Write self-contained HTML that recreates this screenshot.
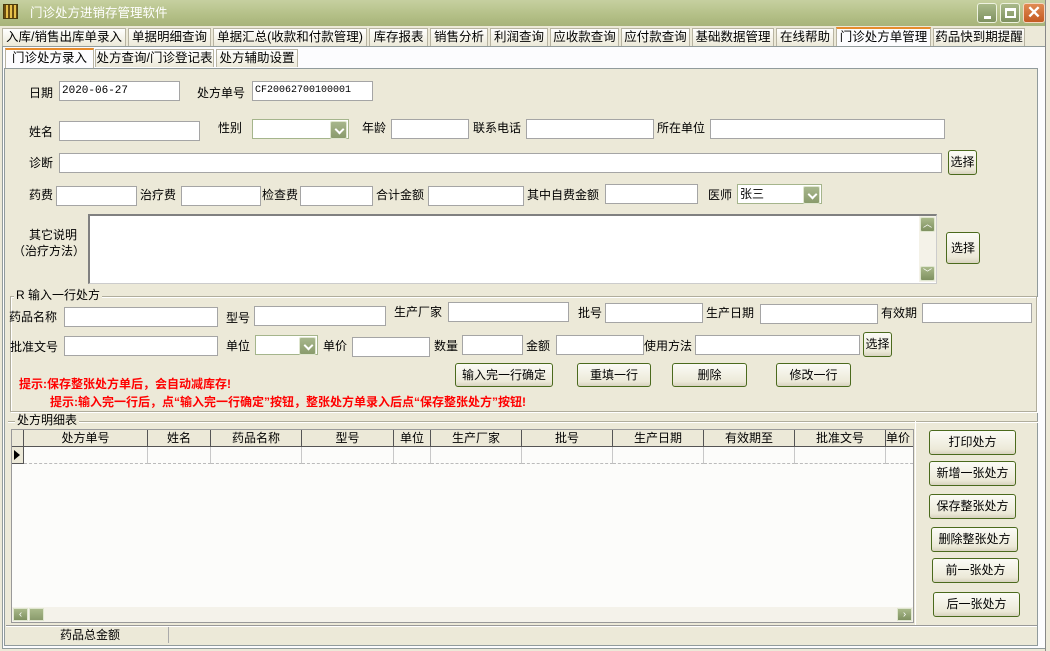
<!DOCTYPE html>
<html><head><meta charset="utf-8">
<style>
*{box-sizing:border-box;margin:0;padding:0}
body{width:1050px;height:651px;overflow:hidden;background:#ece9d8;font-family:"Liberation Sans","WenQuanYi Zen Hei","Noto Sans CJK SC",sans-serif;font-size:12px;color:#000;position:relative}
.a{position:absolute}
.l{position:absolute;white-space:nowrap;line-height:14px}
.i{position:absolute;background:#fff;border:1px solid #a5a5a5;height:20px;font-size:12px;line-height:18px;padding-left:2px;white-space:nowrap}
.s{position:absolute;background:#fff;border:1px solid #a5b58c;height:20px;line-height:18px;padding-left:2px}
.s:after{content:"";position:absolute;right:1px;top:1px;width:15px;height:16px;background:linear-gradient(#a7b68c,#8a9b6c);border:1px solid #dfe6cf;border-radius:2px}
.s:before{content:"";position:absolute;right:5px;top:6px;width:5px;height:5px;border-right:2px solid #fff;border-bottom:2px solid #fff;transform:rotate(45deg);z-index:2}
.b{position:absolute;background:linear-gradient(#fbfbf6,#ece9d8 80%,#d8d3bf);border:1px solid #4b6a1d;border-radius:3px;text-align:center;white-space:nowrap;font-size:12px}
.tab{position:absolute;top:28px;height:18px;border:1px solid #b8b4a2;border-bottom:none;background:linear-gradient(#fff,#ece9d8);text-align:center;line-height:17px;font-size:12.5px;white-space:nowrap}
.st{position:absolute;top:49px;height:18px;border:1px solid #b8b4a2;border-bottom:none;background:linear-gradient(#fff,#ece9d8);text-align:center;line-height:17px;font-size:12.5px;white-space:nowrap}
.red{position:absolute;color:#f00;font-weight:bold;white-space:nowrap;font-size:12px}
.th{position:absolute;top:430px;height:16px;border-right:1px solid #555;text-align:center;line-height:16px;font-size:12px;background:#ece9d8}
.td{position:absolute;top:447px;height:17px;border-right:1px solid #c8c8c8;border-bottom:1px dashed #bbb}
</style></head><body>
<!-- title bar -->
<div class="a" style="left:0;top:0;width:1050px;height:26px;background:linear-gradient(#c6d0a0,#b3bf86 60%,#a7b37a)"></div>
<div class="a" style="left:3px;top:4px;width:15px;height:15px;background:repeating-linear-gradient(90deg,#6b4d10 0 2px,#e7c04a 2px 4px);border:1px solid #4b3a0a"></div>
<div class="l" style="left:30px;top:6px;color:#fff;font-size:12.5px">门诊处方进销存管理软件</div>
<div class="a" style="left:977px;top:3px;width:20px;height:20px;background:linear-gradient(#a9b98a,#7f9160);border:1px solid #eef2e0;border-radius:3px"><div class="a" style="left:6px;top:12px;width:7px;height:3px;background:#fff"></div></div>
<div class="a" style="left:1000px;top:3px;width:20px;height:20px;background:linear-gradient(#a9b98a,#7f9160);border:1px solid #eef2e0;border-radius:3px"><div class="a" style="left:4px;top:4px;width:11px;height:10px;border:2px solid #fff;border-top-width:3px"></div></div>
<div class="a" style="left:1023px;top:3px;width:22px;height:20px;background:linear-gradient(#e08a52,#c45a22);border:1px solid #f5d6c0;border-radius:3px;color:#fff;font-size:17px;line-height:18px;text-align:center;font-weight:bold">✕</div>
<!-- top tabs -->
<div class="tab" style="left:2px;width:124px">入库/销售出库单录入</div>
<div class="tab" style="left:128px;width:83px">单据明细查询</div>
<div class="tab" style="left:213px;width:154px">单据汇总(收款和付款管理)</div>
<div class="tab" style="left:369px;width:59px">库存报表</div>
<div class="tab" style="left:430px;width:58px">销售分析</div>
<div class="tab" style="left:490px;width:58px">利润查询</div>
<div class="tab" style="left:550px;width:69px">应收款查询</div>
<div class="tab" style="left:621px;width:69px">应付款查询</div>
<div class="tab" style="left:692px;width:82px">基础数据管理</div>
<div class="tab" style="left:776px;width:58px">在线帮助</div>
<div class="tab" style="left:836px;width:95px;top:27px;height:20px;background:#fcfcfe;border-top:2px solid #e68b2c">门诊处方单管理</div>
<div class="tab" style="left:933px;width:92px">药品快到期提醒</div>
<!-- outer panel -->
<div class="a" style="left:2px;top:46px;width:1044px;height:603px;border:1px solid #919b9c;background:#fcfcfe"></div>
<div class="a" style="left:1045px;top:0;width:5px;height:651px;background:#ece9d8;border-left:1px solid #888"></div>
<!-- sub tabs -->
<div class="st" style="left:5px;width:89px;top:48px;height:20px;background:#fcfcfe;border-top:2px solid #e68b2c">门诊处方录入</div>
<div class="st" style="left:95px;width:119px">处方查询/门诊登记表</div>
<div class="st" style="left:216px;width:82px">处方辅助设置</div>
<div class="a" style="left:4px;top:68px;width:1034px;height:578px;border:1px solid #919b9c;background:#ece9d8"></div>
<!-- row 1 -->
<div class="l" style="left:29px;top:86px">日期</div>
<div class="i" style="left:59px;top:81px;width:121px;font-family:'Liberation Mono',monospace;font-size:11px">2020-06-27</div>
<div class="l" style="left:197px;top:86px">处方单号</div>
<div class="i" style="left:252px;top:81px;width:121px;font-family:'Liberation Mono',monospace;font-size:10px">CF20062700100001</div>
<!-- row 2 -->
<div class="l" style="left:29px;top:125px">姓名</div>
<div class="i" style="left:59px;top:121px;width:141px"></div>
<div class="l" style="left:218px;top:121px">性别</div>
<div class="s" style="left:252px;top:119px;width:97px"></div>
<div class="l" style="left:362px;top:121px">年龄</div>
<div class="i" style="left:391px;top:119px;width:78px"></div>
<div class="l" style="left:473px;top:121px">联系电话</div>
<div class="i" style="left:526px;top:119px;width:128px"></div>
<div class="l" style="left:657px;top:121px">所在单位</div>
<div class="i" style="left:710px;top:119px;width:235px"></div>
<!-- row 3 -->
<div class="l" style="left:29px;top:156px">诊断</div>
<div class="i" style="left:59px;top:153px;width:883px"></div>
<div class="b" style="left:948px;top:150px;width:29px;height:25px;line-height:23px">选择</div>
<!-- row 4 -->
<div class="l" style="left:29px;top:188px">药费</div>
<div class="i" style="left:56px;top:186px;width:81px"></div>
<div class="l" style="left:140px;top:188px">治疗费</div>
<div class="i" style="left:181px;top:186px;width:80px"></div>
<div class="l" style="left:262px;top:188px">检查费</div>
<div class="i" style="left:300px;top:186px;width:73px"></div>
<div class="l" style="left:376px;top:188px">合计金额</div>
<div class="i" style="left:428px;top:186px;width:96px"></div>
<div class="l" style="left:527px;top:188px">其中自费金额</div>
<div class="i" style="left:605px;top:184px;width:93px"></div>
<div class="l" style="left:708px;top:188px">医师</div>
<div class="s" style="left:737px;top:184px;width:85px">张三</div>
<!-- notes -->
<div class="l" style="left:27px;top:228px;width:50px;text-align:right">其它说明</div>
<div class="l" style="left:13px;top:244px">（治疗方法）</div>
<div class="a" style="left:88px;top:214px;width:849px;height:70px;background:#fff;border:1px solid #ccc;border-top:2px solid #808080;border-left:2px solid #808080"></div>
<div class="a" style="left:919px;top:216px;width:17px;height:66px;background:#f4f2e8"></div>
<div class="a" style="left:920px;top:217px;width:15px;height:15px;background:linear-gradient(#a9b98a,#7f9160);border:1px solid #dfe6cf;border-radius:2px;color:#fff;font-size:9px;text-align:center;line-height:13px">︿</div>
<div class="a" style="left:920px;top:266px;width:15px;height:15px;background:linear-gradient(#a9b98a,#7f9160);border:1px solid #dfe6cf;border-radius:2px;color:#fff;font-size:9px;text-align:center;line-height:13px">﹀</div>
<div class="b" style="left:946px;top:232px;width:34px;height:32px;line-height:30px">选择</div>
<!-- group R -->
<div class="a" style="left:10px;top:296px;width:1027px;height:116px;border:1px solid #b0ad9c;box-shadow:inset 1px 1px #fff,1px 1px #fff"></div>
<div class="l" style="left:14px;top:288px;background:#ece9d8;padding:0 2px">R 输入一行处方</div>
<div class="l" style="left:9px;top:310px">药品名称</div>
<div class="i" style="left:64px;top:307px;width:154px"></div>
<div class="l" style="left:226px;top:311px">型号</div>
<div class="i" style="left:254px;top:306px;width:132px"></div>
<div class="l" style="left:394px;top:305px">生产厂家</div>
<div class="i" style="left:448px;top:302px;width:121px"></div>
<div class="l" style="left:578px;top:306px">批号</div>
<div class="i" style="left:605px;top:303px;width:98px"></div>
<div class="l" style="left:706px;top:306px">生产日期</div>
<div class="i" style="left:760px;top:304px;width:118px"></div>
<div class="l" style="left:881px;top:306px">有效期</div>
<div class="i" style="left:922px;top:303px;width:110px"></div>
<div class="l" style="left:10px;top:340px">批准文号</div>
<div class="i" style="left:64px;top:336px;width:154px"></div>
<div class="l" style="left:226px;top:339px">单位</div>
<div class="s" style="left:255px;top:335px;width:63px"></div>
<div class="l" style="left:323px;top:339px">单价</div>
<div class="i" style="left:352px;top:337px;width:78px"></div>
<div class="l" style="left:434px;top:339px">数量</div>
<div class="i" style="left:462px;top:335px;width:61px"></div>
<div class="l" style="left:526px;top:339px">金额</div>
<div class="i" style="left:556px;top:335px;width:88px"></div>
<div class="l" style="left:644px;top:339px">使用方法</div>
<div class="i" style="left:695px;top:335px;width:165px"></div>
<div class="b" style="left:863px;top:332px;width:29px;height:25px;line-height:23px">选择</div>
<div class="b" style="left:455px;top:363px;width:98px;height:24px;line-height:22px">输入完一行确定</div>
<div class="b" style="left:577px;top:363px;width:74px;height:24px;line-height:22px">重填一行</div>
<div class="b" style="left:672px;top:363px;width:75px;height:24px;line-height:22px">删除</div>
<div class="b" style="left:776px;top:363px;width:75px;height:24px;line-height:22px">修改一行</div>
<div class="red" style="left:19px;top:375px">提示:保存整张处方单后，会自动减库存!</div>
<div class="red" style="left:50px;top:393px">提示:输入完一行后，点“输入完一行确定”按钮，整张处方单录入后点“保存整张处方”按钮!</div>
<!-- detail group -->
<div class="a" style="left:8px;top:421px;width:1030px;height:204px;border-top:1px solid #b0ad9c;box-shadow:0 1px #fff inset"></div>
<div class="l" style="left:15px;top:413px;background:#ece9d8;padding:0 2px">处方明细表</div>
<div class="a" style="left:11px;top:429px;width:903px;height:194px;background:#fcfcfa;border:1px solid #999"></div>
<div class="a" style="left:12px;top:430px;width:901px;height:17px;background:#ece9d8;border-bottom:1px solid #555"></div>
<div class="th" style="left:12px;width:12px"></div>
<div class="th" style="left:24px;width:124px">处方单号</div>
<div class="th" style="left:148px;width:63px">姓名</div>
<div class="th" style="left:211px;width:91px">药品名称</div>
<div class="th" style="left:302px;width:92px">型号</div>
<div class="th" style="left:394px;width:37px">单位</div>
<div class="th" style="left:431px;width:91px">生产厂家</div>
<div class="th" style="left:522px;width:91px">批号</div>
<div class="th" style="left:613px;width:91px">生产日期</div>
<div class="th" style="left:704px;width:91px">有效期至</div>
<div class="th" style="left:795px;width:91px">批准文号</div>
<div class="th" style="left:886px;width:27px;border-right:none;text-align:left">单价</div>
<div class="a" style="left:12px;top:447px;width:12px;height:17px;background:#ece9d8;border-right:1px solid #555;border-bottom:1px solid #555"></div>
<div class="a" style="left:14px;top:450px;width:0;height:0;border-left:6px solid #000;border-top:5px solid transparent;border-bottom:5px solid transparent"></div>
<div class="td" style="left:24px;width:124px"></div>
<div class="td" style="left:148px;width:63px"></div>
<div class="td" style="left:211px;width:91px"></div>
<div class="td" style="left:302px;width:92px"></div>
<div class="td" style="left:394px;width:37px"></div>
<div class="td" style="left:431px;width:91px"></div>
<div class="td" style="left:522px;width:91px"></div>
<div class="td" style="left:613px;width:91px"></div>
<div class="td" style="left:704px;width:91px"></div>
<div class="td" style="left:795px;width:91px"></div>
<div class="td" style="left:886px;width:27px;border-right:none"></div>
<div class="a" style="left:12px;top:607px;width:901px;height:15px;background:#f4f2ea"></div>
<div class="a" style="left:13px;top:608px;width:15px;height:13px;background:linear-gradient(#a9b98a,#7f9160);border:1px solid #dfe6cf;color:#fff;font-size:10px;line-height:11px;text-align:center">‹</div>
<div class="a" style="left:29px;top:608px;width:15px;height:13px;background:linear-gradient(#a9b98a,#8a9b6c);border:1px solid #dfe6cf"></div>
<div class="a" style="left:897px;top:608px;width:15px;height:13px;background:linear-gradient(#a9b98a,#7f9160);border:1px solid #dfe6cf;color:#fff;font-size:10px;line-height:11px;text-align:center">›</div>
<!-- right buttons -->
<div class="a" style="left:915px;top:421px;width:121px;height:204px;border-left:1px solid #fff"></div>
<div class="b" style="left:929px;top:430px;width:87px;height:25px;line-height:23px">打印处方</div>
<div class="b" style="left:929px;top:461px;width:87px;height:25px;line-height:23px">新增一张处方</div>
<div class="b" style="left:929px;top:494px;width:87px;height:25px;line-height:23px">保存整张处方</div>
<div class="b" style="left:931px;top:527px;width:87px;height:25px;line-height:23px">删除整张处方</div>
<div class="b" style="left:932px;top:558px;width:87px;height:25px;line-height:23px">前一张处方</div>
<div class="b" style="left:933px;top:592px;width:87px;height:25px;line-height:23px">后一张处方</div>
<!-- status -->
<div class="a" style="left:6px;top:625px;width:1031px;height:19px;border-top:1px solid #999;box-shadow:inset 0 1px #fff"></div>
<div class="a" style="left:168px;top:627px;width:1px;height:16px;background:#aaa"></div>
<div class="l" style="left:60px;top:628px">药品总金额</div>
</body></html>
